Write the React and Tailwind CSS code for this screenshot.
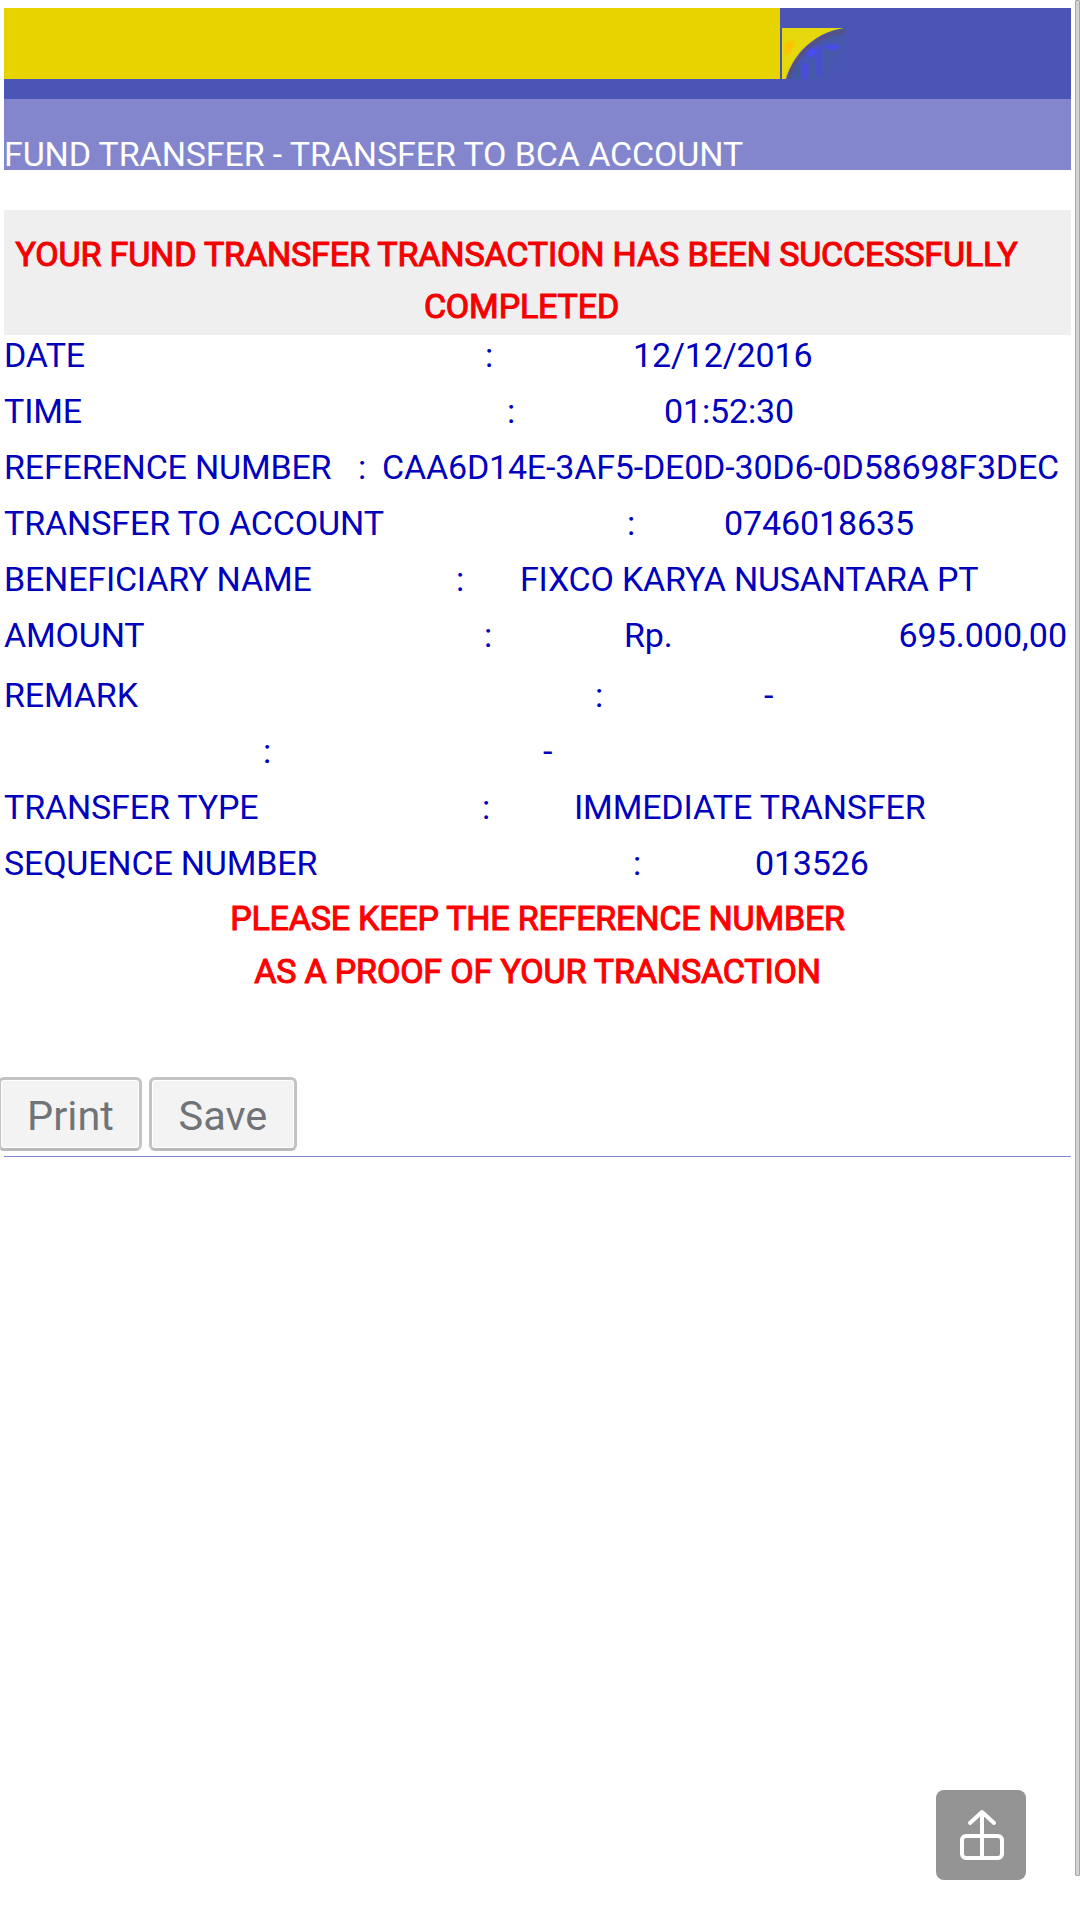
const rows = [
  { label: "DATE", colon: "w-[481px]", gap: "w-[148px]", value: "12/12/2016" },
  { label: "TIME", colon: "w-[503px]", gap: "w-[157px]", value: "01:52:30" },
  { label: "REFERENCE NUMBER", colon: "w-[354px]", gap: "w-[24px]", value: "CAA6D14E-3AF5-DE0D-30D6-0D58698F3DEC", tracking: "tracking-[-0.18px]" },
  { label: "TRANSFER TO ACCOUNT", colon: "w-[623px]", gap: "w-[97px]", value: "0746018635", tracking: "tracking-[-0.12px]" },
  { label: "BENEFICIARY NAME", colon: "w-[452px]", gap: "w-[64px]", value: "FIXCO KARYA NUSANTARA PT", tracking: "tracking-[-0.2px]" },
  { label: "AMOUNT", colon: "w-[480px]", gap: "w-[140px]", value: "Rp.", amount: "695.000,00", height: "h-[60px]" },
  { label: "REMARK", colon: "w-[591px]", gap: "w-[169px]", value: "-" },
  { label: "", colon: "w-[259px]", gap: "w-[280px]", value: "-" },
  { label: "TRANSFER TYPE", colon: "w-[478px]", gap: "w-[92px]", value: "IMMEDIATE TRANSFER" },
  { label: "SEQUENCE NUMBER", colon: "w-[629px]", gap: "w-[122px]", value: "013526", tracking: "tracking-[-0.18px]" },
];

function CornerLogo() {
  return (
    <svg className="block" width="64" height="51" viewBox="0 0 64 51" aria-hidden="true">
      <defs>
        <linearGradient id="corner" x1="0" y1="0" x2="1" y2="0.5">
          <stop offset="0" stopColor="#4a50d0" />
          <stop offset="0.45" stopColor="#4654c0" />
          <stop offset="0.75" stopColor="#465ba4" />
          <stop offset="1" stopColor="#4a55b5" />
        </linearGradient>
        <filter id="soft" x="-20%" y="-20%" width="140%" height="140%">
          <feGaussianBlur stdDeviation="1.1" />
        </filter>
      </defs>
      <rect width="64" height="51" fill="url(#corner)" />
      <ellipse cx="29" cy="24" rx="4" ry="5" fill="#4848ff" filter="url(#soft)" />
      <ellipse cx="50" cy="19" rx="8" ry="3" fill="#484ce8" filter="url(#soft)" />
      <rect x="20" y="36" width="6" height="15" fill="#4b4be0" filter="url(#soft)" />
      <rect x="34" y="18" width="6" height="30" fill="#4a4ed4" filter="url(#soft)" />
      <rect x="12" y="39" width="6" height="12" fill="#405c9c" filter="url(#soft)" />
      <path d="M0 0H62C37 4 14 20 4 51H0Z" fill="#e6d80c" />
      <path d="M3 15L14 12L8 26L2 27Z" fill="#fcc400" filter="url(#soft)" />
      <path d="M63 3C39 7 15 22 6 52" fill="none" stroke="#5a4f78" strokeWidth="3" filter="url(#soft)" />
    </svg>
  );
}

function Row({ label, colon, gap, value, amount, height = "h-[56px]", tracking = "tracking-[-0.15px]" }) {
  return (
    <div className={`flex ${height} ${tracking} pr-1`}>
      <div className={`${colon} shrink-0`}>{label}</div>
      <div className={`${gap} shrink-0`}>:</div>
      <div>{value}</div>
      {amount && <div className="ml-auto tracking-normal">{amount}</div>}
    </div>
  );
}

const heading = "[-webkit-text-stroke:1.1px_currentColor]";
const button =
  "h-[74px] rounded-[6px] border-3 border-[#c3c3c3] border-b-[#b9b9b9] bg-[#f3f3f3] pt-0.5 text-[41.5px] leading-[68px] tracking-normal text-[#707478] shadow-[inset_0_0_0_1px_#fff]";

export default function App() {
  return (
    <div className="relative flex h-[1920px] w-[1080px] justify-between overflow-hidden bg-white font-['Roboto',sans-serif] text-[34px] leading-[40px] tracking-[-0.15px] whitespace-nowrap">
      <main className="ml-1 w-[1067px] pt-2">
        <header>
          <div className="flex h-[91px] bg-[#4a55b5]">
            <div className="mr-0.5 h-[71px] w-[776px] bg-[#e7d300]" />
            <div className="pt-5">
              <CornerLogo />
            </div>
          </div>
          <div className="h-[71px] bg-[#8486cd] pt-[35px] tracking-[-0.12px] text-white">FUND TRANSFER - TRANSFER TO BCA ACCOUNT</div>
        </header>

        <section className="mt-10 h-[125px] bg-[#efefef] pt-6 text-center text-[#f40000]">
          <div className={`${heading} h-[52px] pr-[42px]`}>YOUR FUND TRANSFER TRANSACTION HAS BEEN SUCCESSFULLY</div>
          <div className={`${heading} h-[53px] pr-[32px]`}>COMPLETED</div>
        </section>

        <section className="text-[#0000bd]">
          {rows.map((row, i) => (
            <Row key={i} {...row} />
          ))}
        </section>

        <section className="-mt-px text-center text-[#ff0000]">
          <div className={`${heading} h-[53px] tracking-[-0.2px]`}>PLEASE KEEP THE REFERENCE NUMBER</div>
          <div className={`${heading} h-[53px]`}>AS A PROOF OF YOUR TRANSACTION</div>
        </section>

        <div className="-ml-1.5 mt-[73px] flex gap-[7px]">
          <button className={`${button} w-[144px] pl-px`}>Print</button>
          <button className={`${button} w-[148px]`}>Save</button>
        </div>
        <hr className="mt-[5px] border-t border-[#8084d4]" />
      </main>

      <div className="h-[1876px] w-[5px] rounded-[1px] border border-[#a9a9a9] bg-[#d2d2d2]" />

      <button className="absolute top-[1790px] left-[936px] flex size-[90px] items-center justify-center rounded-lg bg-[#949494] pl-0.5">
        <svg width="46" height="52" viewBox="0 0 46 52" fill="none" stroke="white" strokeWidth="4" strokeLinecap="round" strokeLinejoin="round" aria-label="Share">
          <rect x="3" y="27" width="40" height="22" rx="4" />
          <path d="M23 49V3M11 14L23 3L35 14" />
        </svg>
      </button>
    </div>
  );
}
